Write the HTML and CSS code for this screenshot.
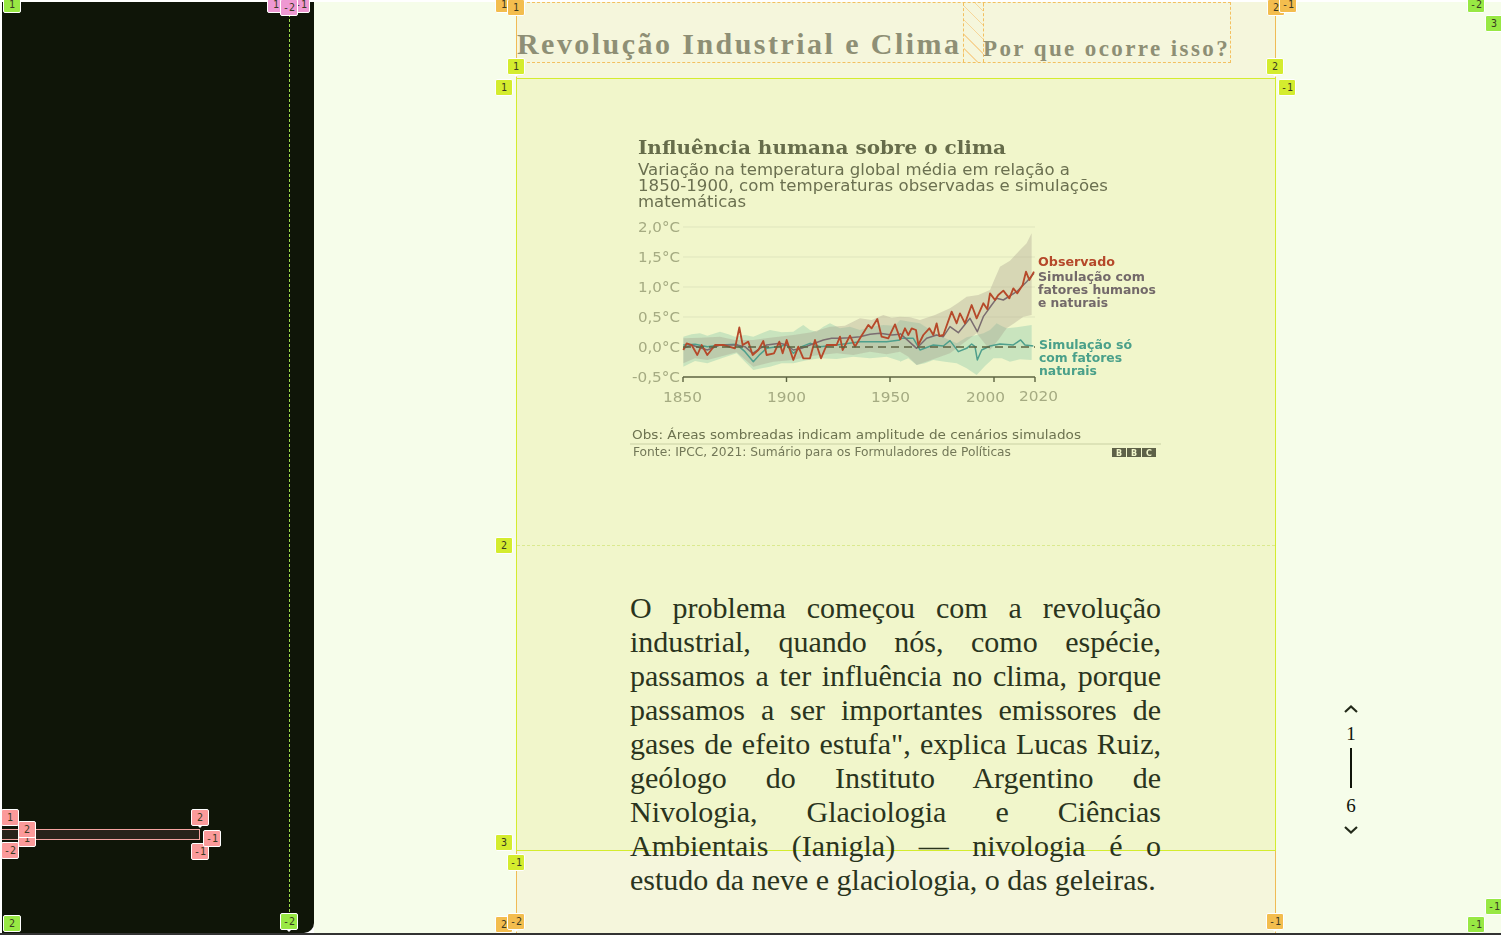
FILE: index.html
```html
<!DOCTYPE html>
<html lang="pt">
<head>
    <meta charset="utf-8">
    <title>Revolução Industrial e Clima</title>
    <link rel="stylesheet" href="styles.css">
</head>
<body>
    <div class="app">
        <aside class="sidebar">
            <div class="sidebar-bar"></div>
        </aside>

        <main class="story">
            <div class="column">
                <header class="heading">
                    <h1>Revolução Industrial e Clima</h1>
                    <div class="gap-hatch"></div>
                    <h2>Por que ocorre isso?</h2>
                </header>

                <section class="slide">
                    <div class="slide-chart">
                        <svg class="chart" viewBox="630 130 532 340" width="532" height="340">
                            <!-- gridlines -->
                            <g class="grid-lines">
                                <line x1="683" x2="1035" y1="227" y2="227"/>
                                <line x1="683" x2="1035" y1="257" y2="257"/>
                                <line x1="683" x2="1035" y1="287" y2="287"/>
                                <line x1="683" x2="1035" y1="317" y2="317"/>
                            </g>

                            <!-- left part of the series -->
                            <g transform="translate(620 295) scale(.3333)">
                                <polygon class="band-teal" points="190,125 215,118 240,115 262,122 300,110 325,118 345,125 375,120 400,125 425,115 450,105 485,112 520,110 535,100 550,90 570,105 590,110 610,95 630,85 660,100 690,95 720,105 755,95 790,90 825,92 840,75 840,198 800,185 750,190 700,185 650,192 600,190 560,196 520,205 485,205 450,215 425,220 400,225 375,200 350,175 305,190 262,205 225,198 190,215"/>
                                <polygon class="band-tan" points="190,130 240,128 300,125 345,135 400,135 450,128 520,120 575,112 630,95 675,92 720,70 755,75 790,60 815,68 840,65 840,170 800,178 750,170 700,180 650,175 600,180 560,185 520,195 460,200 400,215 350,172 300,185 262,195 225,190 190,205"/>
                                <polyline class="line-teal" points="190,150 225,148 262,155 300,150 350,148 375,170 400,200 420,178 440,160 470,155 500,150 520,175 545,155 570,145 600,155 650,150 720,140 800,140 840,135"/>
                                <polyline class="line-purple" points="190,160 215,150 240,158 262,165 300,150 350,150 375,155 398,175 420,160 440,150 480,145 500,150 520,165 545,160 570,150 610,135 635,130 660,130 690,128 720,125 750,118 780,115 815,120 840,118"/>
                                <polyline class="line-red" points="190,165 200,145 215,150 232,180 245,150 262,180 285,150 310,150 345,160 358,97 368,150 385,140 398,180 415,165 430,138 440,180 462,175 478,140 488,175 500,135 520,195 535,155 550,190 570,190 585,135 603,190 620,150 650,150 660,125 668,165 690,122 705,155 720,130 745,90 755,100 772,72 785,125 805,130 825,88 842,135"/>
                            </g>

                            <!-- right part of the series -->
                            <g transform="translate(900 220) scale(.3333)">
                                <polygon class="band-teal" points="0,300 30,305 60,310 115,345 170,370 200,352 230,345 250,340 270,330 290,310 305,318 320,325 350,322 395,315 395,420 360,418 330,425 305,415 280,415 255,438 230,465 200,445 170,430 135,425 100,420 75,430 50,435 25,415 0,425"/>
                                <polygon class="band-tan" points="0,290 30,292 60,300 105,285 150,265 175,248 200,230 235,225 270,210 285,175 300,140 330,122 360,90 380,70 395,40 395,285 370,290 345,308 320,325 295,360 270,390 250,365 230,340 190,370 150,400 100,418 50,435 25,410 0,395"/>
                                <polyline class="line-teal" points="0,355 40,355 60,390 100,375 130,378 150,362 175,395 200,385 215,372 225,380 232,420 245,390 270,378 300,372 340,375 362,360 375,375 400,378"/>
                                <polyline class="line-purple" points="0,340 50,385 80,355 110,345 130,350 150,320 175,338 210,295 232,335 250,290 275,255 290,235 310,240 350,215 380,185 402,160"/>
                                <polyline class="line-red" points="0,360 15,325 25,345 35,325 48,330 55,375 70,345 88,325 100,345 110,310 118,348 130,345 155,275 170,310 180,280 195,310 215,255 230,295 250,250 262,268 270,220 285,240 295,225 310,212 328,235 340,205 352,220 368,195 378,155 388,180 402,155"/>
                            </g>

                            <line class="zero-line" x1="683" x2="1035" y1="347" y2="347"/>

                            <!-- axis -->
                            <g class="axis">
                                <line x1="683" x2="1035" y1="377" y2="377"/>
                                <line x1="683" x2="683" y1="377" y2="382"/>
                                <line x1="786.5" x2="786.5" y1="377" y2="382"/>
                                <line x1="890" x2="890" y1="377" y2="382"/>
                                <line x1="994" x2="994" y1="377" y2="382"/>
                                <line x1="1035" x2="1035" y1="377" y2="382"/>
                            </g>

                            <text class="c-title" x="638" y="154" textLength="368" lengthAdjust="spacingAndGlyphs">Influência humana sobre o clima</text>
                            <text class="c-sub" x="638" y="175" textLength="432" lengthAdjust="spacingAndGlyphs">Variação na temperatura global média em relação a</text>
                            <text class="c-sub" x="638" y="191" textLength="470" lengthAdjust="spacingAndGlyphs">1850-1900, com temperaturas observadas e simulações</text>
                            <text class="c-sub" x="638" y="207" textLength="108" lengthAdjust="spacingAndGlyphs">matemáticas</text>

                            <g class="c-tick">
                                <text x="638" y="232" textLength="42" lengthAdjust="spacingAndGlyphs">2,0°C</text>
                                <text x="638" y="262" textLength="42" lengthAdjust="spacingAndGlyphs">1,5°C</text>
                                <text x="638" y="292" textLength="42" lengthAdjust="spacingAndGlyphs">1,0°C</text>
                                <text x="638" y="322" textLength="42" lengthAdjust="spacingAndGlyphs">0,5°C</text>
                                <text x="638" y="352" textLength="42" lengthAdjust="spacingAndGlyphs">0,0°C</text>
                                <text x="632" y="382" textLength="48" lengthAdjust="spacingAndGlyphs">-0,5°C</text>
                                <text x="663" y="402" textLength="39" lengthAdjust="spacingAndGlyphs">1850</text>
                                <text x="767" y="402" textLength="39" lengthAdjust="spacingAndGlyphs">1900</text>
                                <text x="871" y="402" textLength="39" lengthAdjust="spacingAndGlyphs">1950</text>
                                <text x="966" y="402" textLength="39" lengthAdjust="spacingAndGlyphs">2000</text>
                                <text x="1019" y="401" textLength="39" lengthAdjust="spacingAndGlyphs">2020</text>
                            </g>

                            <text class="c-legend legend-red" x="1038" y="266" textLength="77" lengthAdjust="spacingAndGlyphs">Observado</text>
                            <text class="c-legend legend-purple" x="1038" y="281" textLength="107" lengthAdjust="spacingAndGlyphs">Simulação com</text>
                            <text class="c-legend legend-purple" x="1038" y="294" textLength="118" lengthAdjust="spacingAndGlyphs">fatores humanos</text>
                            <text class="c-legend legend-purple" x="1038" y="307" textLength="70" lengthAdjust="spacingAndGlyphs">e naturais</text>
                            <text class="c-legend legend-teal" x="1039" y="349" textLength="93" lengthAdjust="spacingAndGlyphs">Simulação só</text>
                            <text class="c-legend legend-teal" x="1039" y="362" textLength="83" lengthAdjust="spacingAndGlyphs">com fatores</text>
                            <text class="c-legend legend-teal" x="1039" y="375" textLength="58" lengthAdjust="spacingAndGlyphs">naturais</text>

                            <text class="c-note" x="632" y="439" textLength="449" lengthAdjust="spacingAndGlyphs">Obs: Áreas sombreadas indicam amplitude de cenários simulados</text>
                            <line class="note-rule" x1="630" x2="1161" y1="444" y2="444"/>
                            <text class="c-source" x="633" y="456" textLength="378" lengthAdjust="spacingAndGlyphs">Fonte: IPCC, 2021: Sumário para os Formuladores de Políticas</text>

                            <!-- BBC blocks -->
                            <g class="bbc-box">
                                <rect x="1112" y="448" width="14" height="9"/>
                                <rect x="1127" y="448" width="14" height="9"/>
                                <rect x="1142" y="448" width="14" height="9"/>
                            </g>
                            <g class="bbc-letter">
                                <text x="1119" y="455.5">B</text>
                                <text x="1134" y="455.5">B</text>
                                <text x="1149" y="455.5">C</text>
                            </g>
                        </svg>
                    </div>

                    <div class="slide-text">
                        <p>O problema começou com a revolução industrial, quando nós, como espécie, passamos a ter influência no clima, porque passamos a ser importantes emissores de gases de efeito estufa", explica Lucas Ruiz, geólogo do Instituto Argentino de Nivologia, Glaciologia e Ciências Ambientais (Ianigla) — nivologia é o estudo da neve e glaciologia, o das geleiras.</p>
                    </div>
                </section>
            </div>

            <nav class="pager">
                <svg class="pager-arrow" viewBox="0 0 14 8" width="14" height="8"><path d="M1 7 7 1.5 13 7"/></svg>
                <span class="pager-num">1</span>
                <span class="pager-line"></span>
                <span class="pager-num">6</span>
                <svg class="pager-arrow" viewBox="0 0 14 8" width="14" height="8"><path d="M1 1 7 6.5 13 1"/></svg>
            </nav>
        </main>

        <!-- grid inspector labels -->
        <div class="overlay">
            <div class="inspect-line"></div>
            <div class="slide-divider"></div>

            <span class="tag tag-green t-g1">1</span>
            <span class="tag tag-green t-g2">2</span>
            <span class="tag tag-green tag-down t-g3">-2</span>
            <span class="tag tag-green t-g4">-2</span>
            <span class="tag tag-green t-g5">3</span>
            <span class="tag tag-green t-g6">-1</span>
            <span class="tag tag-green t-g7">-1</span>

            <span class="tag tag-pink t-p1">1</span>
            <span class="tag tag-pink t-p2">-1</span>
            <span class="tag tag-pink t-p3">-2</span>

            <span class="tag tag-red t-r1">1</span>
            <span class="tag tag-red t-r2">1</span>
            <span class="tag tag-red t-r3">2</span>
            <span class="tag tag-red t-r4">-2</span>
            <span class="tag tag-red tag-down t-r5">2</span>
            <span class="tag tag-red t-r6">-1</span>
            <span class="tag tag-red t-r7">-1</span>

            <span class="tag tag-orange t-o1">1</span>
            <span class="tag tag-orange t-o2">1</span>
            <span class="tag tag-orange t-o3">2</span>
            <span class="tag tag-orange t-o4">-1</span>
            <span class="tag tag-orange t-o5">2</span>
            <span class="tag tag-orange tag-down t-o6">-2</span>
            <span class="tag tag-orange tag-down t-o7">-1</span>

            <span class="tag tag-lime tag-down t-l1">1</span>
            <span class="tag tag-lime t-l2">1</span>
            <span class="tag tag-lime tag-down t-l3">2</span>
            <span class="tag tag-lime t-l4">-1</span>
            <span class="tag tag-lime t-l5">2</span>
            <span class="tag tag-lime t-l6">3</span>
            <span class="tag tag-lime t-l7">-1</span>
        </div>
    </div>
</body>
</html>
```

FILE: styles.css
```css
html, body {
    margin: 0;
    padding: 0;
    height: 100%;
    background-color: #ffffff;
    overflow: hidden;
}
.app {
    position: relative;
    display: grid;
    grid-template-columns: 312px 1fr;
    height: 937px;
    box-sizing: border-box;
    padding: 2px 0 4px 2px;
    background-color: #ffffff;
    overflow: hidden;
}
.app::after {
    content: "";
    position: absolute;
    left: 0;
    right: 0;
    bottom: 2px;
    height: 2px;
    background-color: #333333;
}

/* sidebar */
.sidebar {
    background-color: #0f1508;
    border-bottom-right-radius: 10px;
    padding-top: 827px;
}
.sidebar-bar {
    width: 198px;
    height: 11px;
    box-sizing: border-box;
    background-color: #28231a;
    border: 1px solid #f3a3a0;
    border-left: none;
}

/* main area */
.story {
    display: grid;
    grid-template-columns: 202px 760px 1fr;
    background-color: #f6fdea;
}
.column {
    grid-column: 2;
    display: grid;
    grid-template-rows: 61px 773px;
    row-gap: 15px;
    align-content: start;
    box-sizing: border-box;
    height: 931px;
    background-color: #f5f6dc;
    border-left: 1px solid #f0bb55;
    border-right: 1px solid #f0bb55;
}

.heading {
    display: grid;
    grid-template-columns: 446px 21px 246px;
    align-items: end;
    width: 714px;
    box-sizing: border-box;
    border-top: 1px dashed #f3c060;
    border-bottom: 1px dashed #f3c060;
    border-right: 1px dashed #f3c060;
    color: #8e8f75;
    font-family: "Liberation Serif", serif;
    font-weight: bold;
    white-space: nowrap;
}
.heading h1 {
    margin: 0;
    font-size: 30px;
    line-height: 34px;
    letter-spacing: 2.45px;
    padding-bottom: 1px;
}
.heading h2 {
    margin: 0 0 0 -1px;
    font-size: 23px;
    line-height: 27px;
    letter-spacing: 2.4px;
}
.gap-hatch {
    align-self: stretch;
    box-sizing: border-box;
    border-left: 1px dashed #f3c060;
    border-right: 1px dashed #f3c060;
    background-image: repeating-linear-gradient(45deg, transparent 0 9px, #f6d69a 9px 10px);
}

.slide {
    display: grid;
    grid-template-rows: 466px 1fr;
    margin: 0 -1px;
    box-sizing: border-box;
    background-color: #f1f6cb;
    border: 1px solid #d4ec2e;
}
.slide-chart {
    padding: 51px 0 0 113px;
}
.chart {
    display: block;
    filter: blur(0.5px);
}
.slide-text {
    padding: 46px 114px 0 113px;
}
.slide-text p {
    margin: 0;
    font-family: "Liberation Serif", serif;
    font-size: 30px;
    line-height: 34px;
    text-align: justify;
    color: #2a341d;
}

/* chart pieces */
.grid-lines line {
    stroke: #dfe5bd;
    stroke-width: 1;
}
.band-teal {
    fill: #7fc4a6;
    fill-opacity: 0.35;
}
.band-tan {
    fill: #a79f8b;
    fill-opacity: 0.35;
}
.line-red, .line-purple, .line-teal {
    fill: none;
    stroke-linejoin: round;
}
.line-red {
    stroke: #b6492a;
    stroke-width: 5.5;
}
.line-purple {
    stroke: #7a6c70;
    stroke-width: 4.5;
}
.line-teal {
    stroke: #4e9f8c;
    stroke-width: 4.5;
}
.zero-line {
    stroke: #5c6340;
    stroke-width: 1.4;
    stroke-dasharray: 8 5;
}
.axis line {
    stroke: #5c6340;
    stroke-width: 1.4;
}
.note-rule {
    stroke: #c9cfa3;
    stroke-width: 1.2;
}
.chart text {
    font-family: "DejaVu Sans", sans-serif;
}
.chart .c-title {
    font-family: "DejaVu Serif", serif;
    font-size: 18px;
    font-weight: bold;
    fill: #666c4a;
}
.c-sub {
    font-size: 15px;
    fill: #6b7050;
}
.c-tick text {
    font-size: 14px;
    fill: #a5ab82;
}
.c-legend {
    font-size: 12.5px;
    font-weight: bold;
}
.legend-red {
    fill: #b5482a;
}
.legend-purple {
    fill: #73696a;
}
.legend-teal {
    fill: #4aa08a;
}
.c-note {
    font-size: 13px;
    fill: #6d7350;
}
.c-source {
    font-size: 11.5px;
    fill: #737858;
}
.bbc-box rect {
    fill: #5e6148;
}
.bbc-letter text {
    font-size: 8px;
    font-weight: bold;
    text-anchor: middle;
    fill: #f1f6cb;
}

/* pager */
.pager {
    grid-column: 3;
    align-self: end;
    justify-self: start;
    display: flex;
    flex-direction: column;
    align-items: center;
    width: 30px;
    margin: 0 0 99px 60px;
    font-family: "Liberation Serif", serif;
    font-size: 19px;
    color: #10140a;
}
.pager-arrow {
    display: block;
    fill: none;
    stroke: #232a1a;
    stroke-width: 2.2;
}
.pager-num {
    line-height: 22px;
    margin: 10px 0 2px;
}
.pager-line {
    width: 2px;
    height: 40px;
    margin: 1px 0 7px;
    background-color: #10140a;
}
.pager-num:last-of-type {
    margin: 0 0 9px;
}

/* inspector overlay */
.overlay {
    position: absolute;
    inset: 0;
}
.inspect-line {
    position: absolute;
    left: 289px;
    top: 14px;
    height: 898px;
    border-left: 1px dashed #9ad94a;
}
.slide-divider {
    position: absolute;
    left: 517px;
    top: 545px;
    width: 758px;
    border-top: 1px dashed #dbe98f;
}
.tag {
    position: absolute;
    box-sizing: border-box;
    width: 18px;
    height: 17px;
    border: 1px solid #ffffff;
    border-radius: 2px;
    font-family: "DejaVu Sans Mono", monospace;
    font-size: 10px;
    line-height: 15px;
    text-align: center;
    color: #3a3a22;
}
.tag-down::after {
    content: "";
    position: absolute;
    left: 5px;
    top: 15px;
    border-left: 3px solid transparent;
    border-right: 3px solid transparent;
    border-top: 3px solid #ffffff;
}
.tag-green {
    background-color: #98e844;
}
.tag-pink {
    background-color: #ee98d2;
}
.tag-red {
    background-color: #fb9a9a;
}
.tag-orange {
    background-color: #f3bd4e;
}
.tag-lime {
    background-color: #d4ec2e;
}

.t-g1 { left: 3px; top: -4px; }
.t-g2 { left: 3px; top: 915px; }
.t-g3 { left: 280px; top: 913px; }
.t-g4 { left: 1467px; top: -4px; }
.t-g5 { left: 1485px; top: 15px; }
.t-g6 { left: 1485px; top: 898px; }
.t-g7 { left: 1467px; top: 916px; }

.t-p1 { left: 267px; top: -4px; }
.t-p2 { left: 292px; top: -4px; }
.t-p3 { left: 280px; top: -1px; }

.t-r1 { left: 1px; top: 809px; }
.t-r2 { left: 18px; top: 830px; }
.t-r3 { left: 18px; top: 821px; }
.t-r4 { left: 1px; top: 842px; }
.t-r5 { left: 191px; top: 809px; }
.t-r6 { left: 191px; top: 843px; }
.t-r7 { left: 203px; top: 830px; }

.t-o1 { left: 495px; top: -4px; }
.t-o2 { left: 507px; top: -1px; }
.t-o3 { left: 1267px; top: -1px; }
.t-o4 { left: 1279px; top: -4px; }
.t-o5 { left: 495px; top: 916px; }
.t-o6 { left: 507px; top: 913px; }
.t-o7 { left: 1266px; top: 913px; }

.t-l1 { left: 507px; top: 58px; }
.t-l2 { left: 495px; top: 79px; }
.t-l3 { left: 1266px; top: 58px; }
.t-l4 { left: 1278px; top: 79px; }
.t-l5 { left: 495px; top: 537px; }
.t-l6 { left: 495px; top: 834px; }
.t-l7 { left: 507px; top: 854px; }
```
